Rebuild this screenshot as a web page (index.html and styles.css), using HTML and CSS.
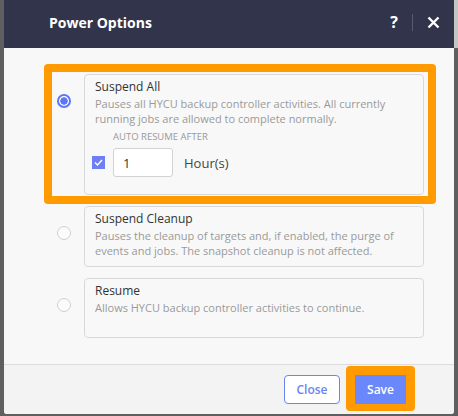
FILE: index.html
```html
<!DOCTYPE html>
<html>
<head>
<meta charset="utf-8">
<link rel="stylesheet" href="styles.css">
</head>
<body>
<div class="modal">
  <div class="header">
    <div class="title">Power Options</div>
    <div class="header-actions">
      <span class="help">?</span>
      <span class="sep"></span>
      <svg class="close-x" width="13" height="13" viewBox="0 0 13 13"><path d="M1.5 1.5 L11.5 11.5 M11.5 1.5 L1.5 11.5" stroke="#fff" stroke-width="2.4" stroke-linecap="butt"/></svg>
    </div>
  </div>
  <div class="body">
    <div class="option option-first">
      <div class="radio-col"><span class="radio checked"></span></div>
      <div class="card">
        <div class="card-title">Suspend All</div>
        <div class="card-desc">Pauses all HYCU backup controller activities. All currently running jobs are allowed to complete normally.</div>
        <div class="auto-label">AUTO RESUME AFTER</div>
        <div class="auto-row">
          <span class="checkbox"><svg width="9" height="7" viewBox="0 0 9 7"><path d="M1 3.5 L3.5 6 L8 1" fill="none" stroke="#fff" stroke-width="1.4"/></svg></span>
          <span class="input">1</span>
          <span class="unit">Hour(s)</span>
        </div>
      </div>
      <div class="annot annot-option"></div>
    </div>
    <div class="option">
      <div class="radio-col"><span class="radio"></span></div>
      <div class="card">
        <div class="card-title">Suspend Cleanup</div>
        <div class="card-desc">Pauses the cleanup of targets and, if enabled, the purge of events and jobs. The snapshot cleanup is not affected.</div>
      </div>
    </div>
    <div class="option">
      <div class="radio-col"><span class="radio"></span></div>
      <div class="card">
        <div class="card-title">Resume</div>
        <div class="card-desc">Allows HYCU backup controller activities to continue.</div>
      </div>
    </div>
  </div>
  <div class="footer">
    <button class="btn btn-close">Close</button>
    <div class="save-wrap">
      <button class="btn btn-save">Save</button>
      <div class="annot annot-save"></div>
    </div>
  </div>
</div>
</body>
</html>
```
FILE: styles.css
```css
* { box-sizing: border-box; }
html, body { margin: 0; padding: 0; }
body {
  width: 458px;
  height: 416px;
  overflow: hidden;
  background: linear-gradient(#c4c4c4, #c4c4c4) right top / 4px 48px no-repeat, #5f5f5f;
  font-family: "Open Sans", "Liberation Sans", sans-serif;
}
.modal {
  margin-left: 4px;
  width: 450px;
  height: 414px;
  background: #f8f8f8;
  border-radius: 0 0 3px 3px;
  display: flex;
  flex-direction: column;
  overflow: hidden;
}
.header {
  height: 48px;
  flex: none;
  background: #32344c;
  display: flex;
  align-items: center;
  padding: 0 14px 4px 45px;
}
.title {
  color: #fff;
  font-size: 14px;
  font-weight: 700;
  flex: 1;
}
.header-actions {
  display: flex;
  align-items: center;
}
.help {
  color: #fff;
  font-weight: 700;
  font-size: 16px;
  margin-top: -1px;
}
.sep {
  width: 1px;
  height: 17px;
  background: #565a72;
  margin: 0 14px 0 14px;
}
.close-x { display: block; }
.body {
  flex: 1;
  padding: 26px 30px 0 40px;
  display: flex;
  flex-direction: column;
  gap: 11px;
}
.option {
  display: flex;
  align-items: flex-start;
  position: relative;
}
.radio-col {
  width: 40px;
  flex: none;
  padding: 20px 0 0 13px;
}
.radio {
  display: block;
  width: 14px;
  height: 14px;
  border-radius: 50%;
  border: 1px solid #cfcfcf;
  background: #fbfbfb;
}
.radio.checked {
  border: 2px solid #5c76f7;
  background: radial-gradient(circle, #5c76f7 0 3.4px, #fff 4px);
}
.card {
  flex: 1;
  border: 1px solid #d8d8d8;
  border-radius: 4px;
  padding: 3px 10px 8px 10px;
  min-height: 60px;
  background: #f8f8f8;
}
.option-first .card { padding-bottom: 17px; }
.card-title {
  color: #333;
  font-size: 12px;
  line-height: 18px;
}
.card-desc {
  color: #9a9a9a;
  font-size: 11px;
  line-height: 15px;
}
.auto-label {
  margin: 4px 0 0 18px;
  font-size: 9.5px;
  line-height: 14px;
  color: #999;
}
.auto-row {
  display: flex;
  align-items: center;
  margin: 4px 0 0 -3px;
}
.checkbox {
  width: 13px;
  height: 13px;
  background: #6d7ff3;
  display: flex;
  align-items: center;
  justify-content: center;
  margin-right: 8px;
}
.checkbox svg { display: block; }
.input {
  width: 60px;
  height: 29px;
  border: 1px solid #d2d2d2;
  border-radius: 3px;
  background: #fff;
  font-size: 13px;
  color: #333;
  padding: 5px 0 0 9px;
}
.unit {
  margin-left: 11px;
  font-size: 13px;
  color: #444;
}
.annot {
  position: absolute;
  border: 8px solid #ff9a00;
  border-radius: 4px;
  pointer-events: none;
}
.annot-option {
  left: 0;
  top: -10px;
  right: -12px;
  bottom: -9px;
}
.footer {
  height: 50px;
  flex: none;
  border-top: 1px solid #dcdcdc;
  background: #f3f3f3;
  display: flex;
  align-items: center;
  justify-content: flex-end;
  padding: 0 48px 0 0;
  gap: 15px;
}
.btn {
  height: 29px;
  border-radius: 4px;
  font-family: "Open Sans", "Liberation Sans", sans-serif;
  font-size: 12px;
  font-weight: 600;
  cursor: pointer;
}
.btn-close {
  width: 56px;
  background: #fff;
  color: #6b84f4;
  border: 1px solid #6b84f4;
}
.save-wrap { position: relative; }
.btn-save {
  display: block;
  width: 51px;
  background: #6a87fc;
  color: #fff;
  border: none;
  border-radius: 0;
}
.annot-save {
  left: -9px;
  top: -9px;
  right: -9px;
  bottom: -7px;
  border-width: 9px 9px 7px 9px;
}
```
